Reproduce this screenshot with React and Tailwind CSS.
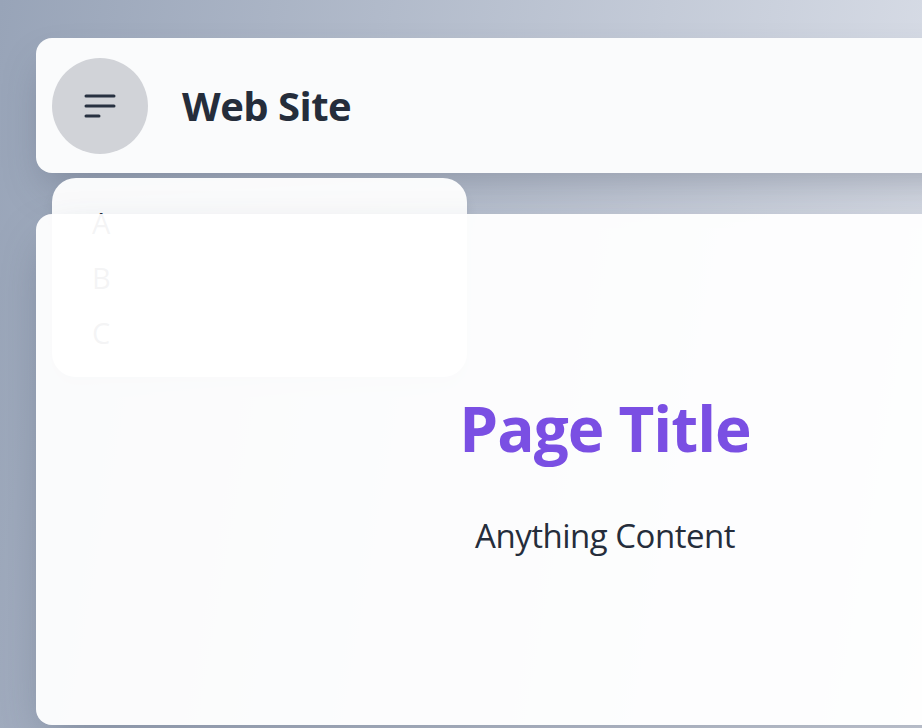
import React from "react";

function MenuIcon() {
  return (
    <svg width="34" height="30" viewBox="0 0 34 30" fill="none" stroke="#283141" strokeWidth="3" strokeLinecap="round">
      <line x1="3" y1="5" x2="31" y2="5" />
      <line x1="3" y1="15" x2="31" y2="15" />
      <line x1="3" y1="25" x2="16" y2="25" />
    </svg>
  );
}

export default function App() {
  return (
    <div
      className="w-[922px] h-[728px] overflow-hidden bg-linear-[100deg] from-[#98a4b8] to-[#dde1ea]"
      style={{ fontFamily: '"Open Sans", "Noto Sans", sans-serif' }}
    >
      <div className="w-[1210px] pt-[38px] pl-[36px]">
        <header className="relative w-[1138px] h-[135px] rounded-2xl bg-[#fafbfc] shadow-[0_20px_40px_-10px_rgba(60,70,90,0.35)] flex items-center pl-4">
          <button className="w-24 h-24 rounded-full bg-[#d1d3d8] flex items-center justify-center">
            <MenuIcon />
          </button>
          <h1 className="ml-[34px] text-[40px] font-bold text-[#252d3b] tracking-[-0.5px]">Web Site</h1>
          <nav className="absolute z-0 top-[140px] left-4 w-[415px] h-[199px] rounded-3xl bg-white/95 shadow-lg px-10 pt-[17px] flex flex-col">
            <span className="text-[29px] leading-[55px] text-[#252d3b]">A</span>
            <span className="text-[29px] leading-[55px] text-[#252d3b]">B</span>
            <span className="text-[29px] leading-[55px] text-[#252d3b]">C</span>
          </nav>
        </header>
        <main className="relative z-10 mt-[41px] w-[1138px] h-[511px] rounded-2xl bg-white/95 shadow-[0_20px_50px_-12px_rgba(60,70,90,0.4)] flex flex-col items-center pt-[170px]">
          <h2 className="text-[62px] leading-[88px] font-bold text-[#7a4fe3] tracking-[-1px]">Page Title</h2>
          <p className="mt-[42px] text-[33px] leading-[44px] text-[#252d3b] tracking-[-0.5px]">Anything Content</p>
        </main>
      </div>
    </div>
  );
}
